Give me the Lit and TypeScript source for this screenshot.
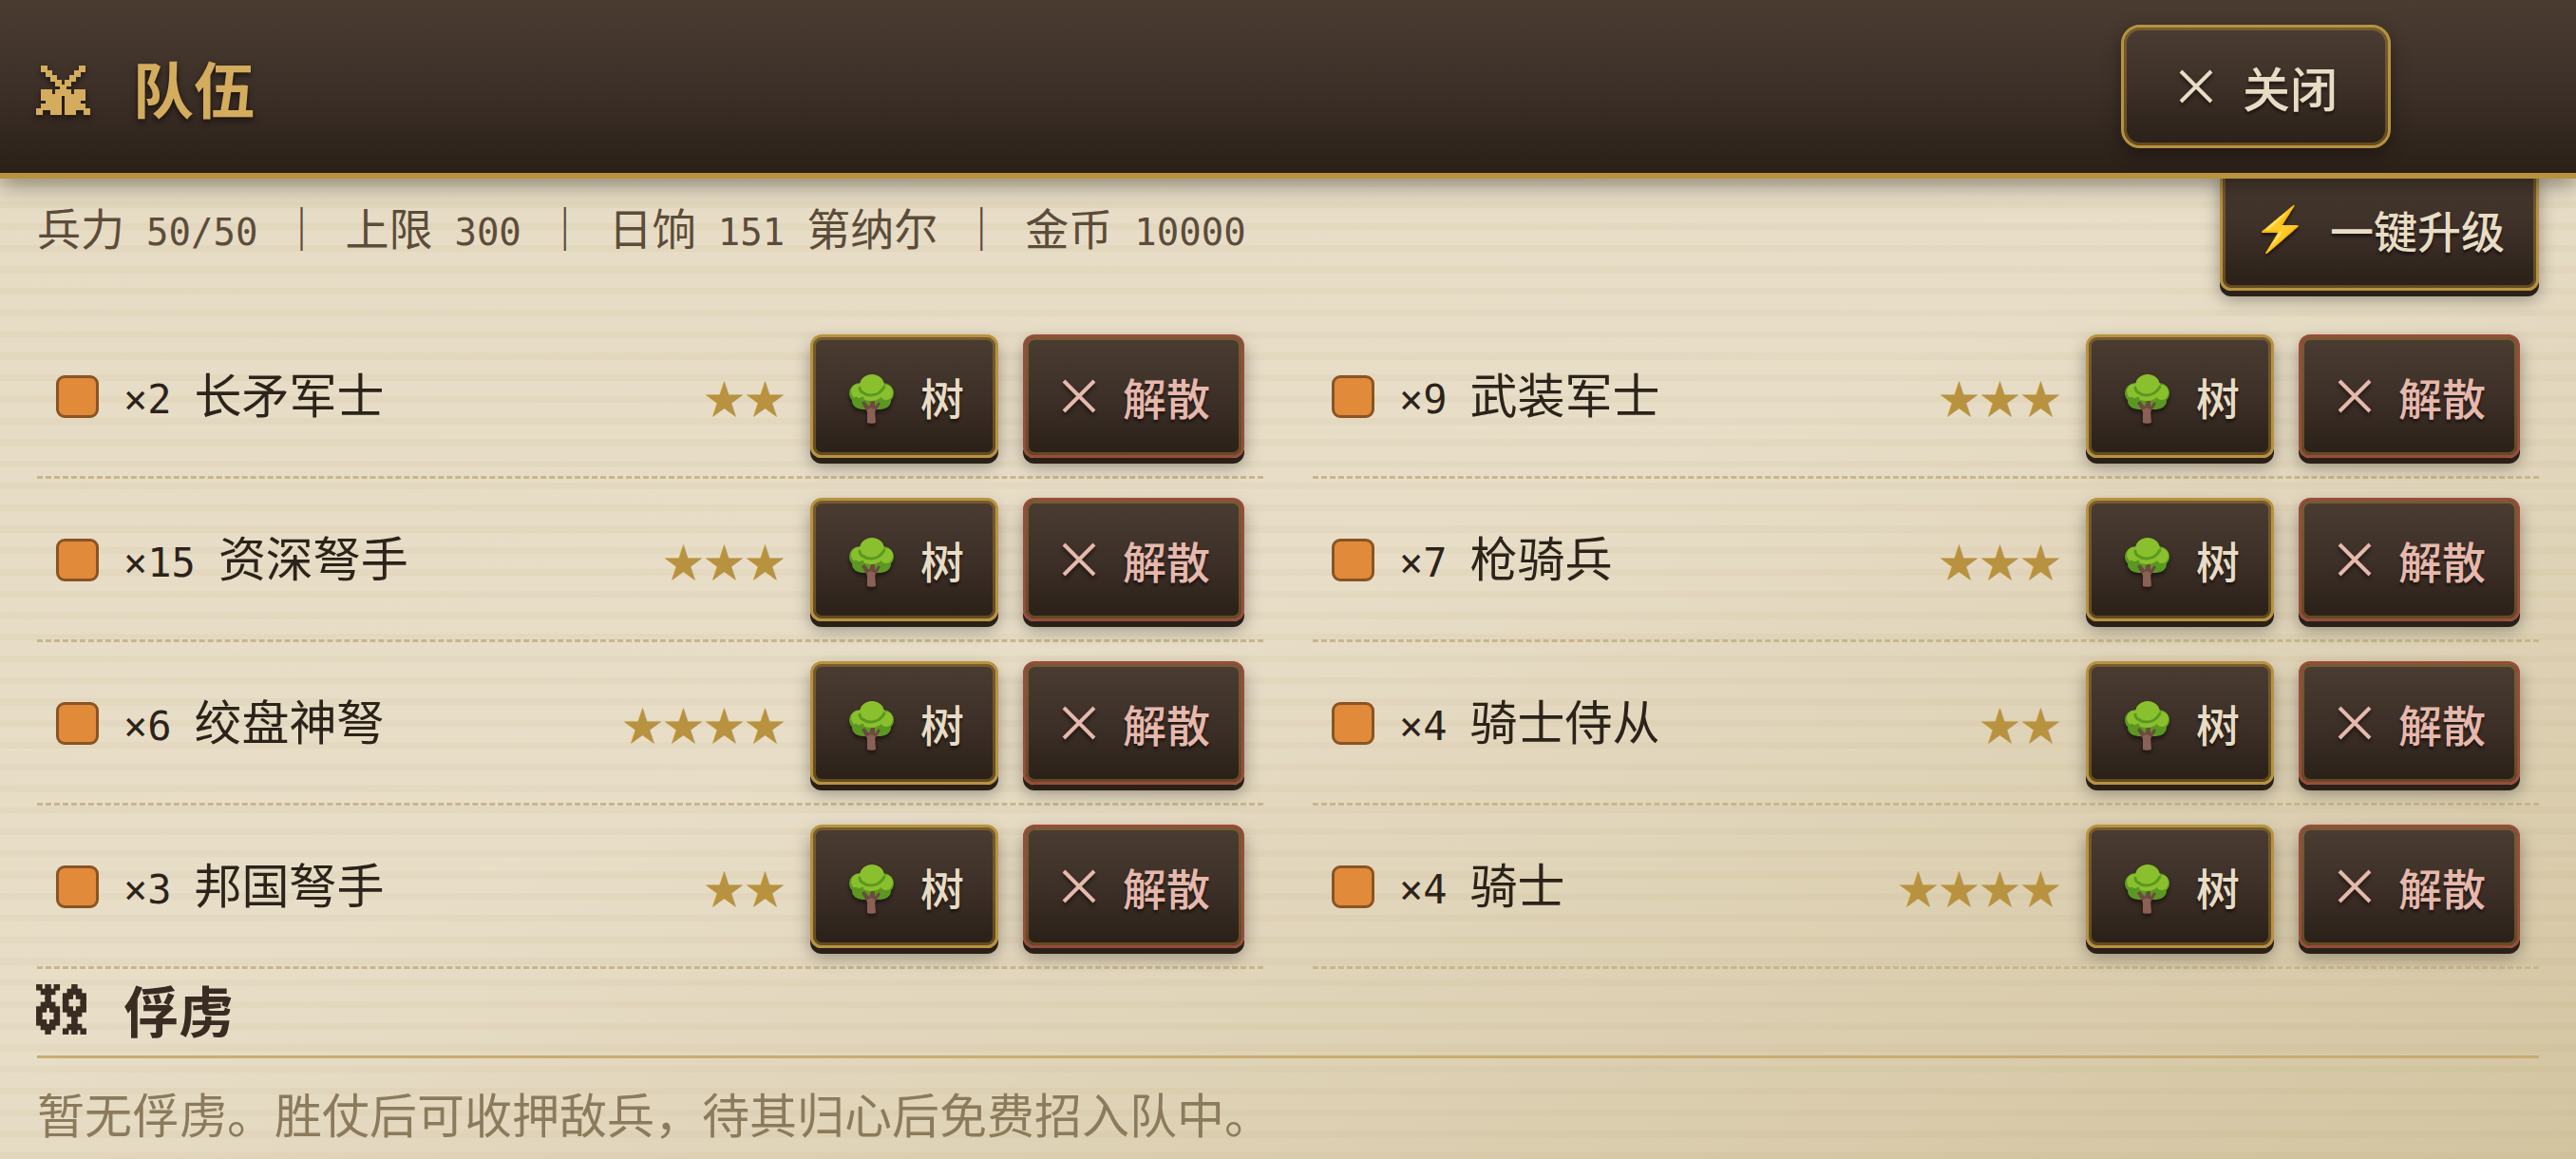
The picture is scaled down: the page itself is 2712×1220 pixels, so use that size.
import { LitElement, html, css, svg } from "lit";
import { customElement } from "lit/decorators.js";

interface Troop {
  count: number;
  name: string;
  stars: number;
}

const TROOPS: Troop[] = [
  { count: 2, name: "长矛军士", stars: 2 },
  { count: 9, name: "武装军士", stars: 3 },
  { count: 15, name: "资深弩手", stars: 3 },
  { count: 7, name: "枪骑兵", stars: 3 },
  { count: 6, name: "绞盘神弩", stars: 4 },
  { count: 4, name: "骑士侍从", stars: 2 },
  { count: 3, name: "邦国弩手", stars: 2 },
  { count: 4, name: "骑士", stars: 4 },
];

// Pixel-art icons: each "#" is one cell of the grid.
const SWORDS = [
  ".#.......#.",
  "..#.....#..",
  "...#...#...",
  "....#.#....",
  ".....#.....",
  ".##.###.##.",
  ".####.####.",
  "..###.###..",
  ".####.####.",
  "#..##.##..#",
];

const CHAINS = [
  "#.#.#...#..",
  ".###...###.",
  "..#...##.##",
  "..#...#...#",
  ".###..#...#",
  "##.##.##.##",
  "#...#..###.",
  "#...#...#..",
  "##.##...#..",
  ".###...###.",
  "..#...#.#.#",
];

const pixels = (rows: string[]) => svg`${rows.map((row, y) =>
  [...row].map((c, x) => (c === "#" ? svg`<rect x=${x} y=${y} width="1" height="1"></rect>` : ""))
)}`;

const cross = html`<svg class="cross" viewBox="0 0 36 36" aria-hidden="true">
  <path d="M2 2L34 34M34 2L2 34"></path>
</svg>`;

const tree = html`<svg class="tree" viewBox="0 0 47 52" aria-hidden="true">
  <g fill="#5b9821">
    <ellipse cx="12" cy="20" rx="12" ry="11"></ellipse>
    <ellipse cx="35" cy="20" rx="12" ry="11"></ellipse>
    <rect x="3" y="18" width="41" height="19" rx="11"></rect>
  </g>
  <g fill="#8ac02d">
    <ellipse cx="10" cy="18" rx="8" ry="8"></ellipse>
    <ellipse cx="39" cy="19" rx="7" ry="8"></ellipse>
    <ellipse cx="23" cy="20" rx="12" ry="8"></ellipse>
    <ellipse cx="24" cy="12" rx="13" ry="12"></ellipse>
  </g>
  <g fill="none" stroke="#5b9821" stroke-width="3" stroke-linecap="round">
    <path d="M11 14C11 17 13 19 16 20"></path>
    <path d="M17 21C26 24 33 20 37 13"></path>
    <path d="M7 25C9 27 12 27 14 25"></path>
  </g>
  <path fill="#6d4a3f" d="M13 30L16 28L21 34L23 28H27V34L31 29L33 31L27 40H19Z"></path>
  <path fill="#8b6055" d="M19 37L23 35L27 37L28 51C26 52 21 52 19 51Z"></path>
</svg>`;

@customElement("app-root")
export class AppRoot extends LitElement {
  static styles = css`
    :host {
      display: block;
      min-height: 100vh;
      box-sizing: border-box;
      color: #2c231a;
      font: 400 50px/66px "Noto Sans CJK SC", sans-serif;
      background:
        repeating-linear-gradient(
            180deg,
            transparent 0 4%,
            rgba(166, 140, 76, 0.06) 4% 8%,
            transparent 8% 12.5%
          )
          0 0 / 100% 182px,
        linear-gradient(160deg, #e6dbc3 0%, #e8dec8 50%, #d3c4a0 100%);
    }
    .header {
      position: relative;
      z-index: 1;
      display: flex;
      align-items: center;
      justify-content: space-between;
      padding: 26px 195px 26px 39px;
      background: linear-gradient(180deg, #4a3c31, #3d3028 50%, #2a2018);
      border-bottom: 6px solid #b8923f;
      box-shadow: 0 6px 24px rgba(0, 0, 0, 0.4);
    }
    .title,
    .section-title {
      display: flex;
      align-items: center;
      margin: 0;
      font-weight: 700;
    }
    .title {
      gap: 46px;
      font-size: 64px;
      color: #d4ac5e;
      text-shadow: 0 3px 6px rgba(0, 0, 0, 0.6);
    }
    .swords {
      width: 55px;
      height: 50px;
      margin-top: 8px;
      overflow: visible;
      fill: currentColor;
      stroke: currentColor;
      stroke-width: 0.4;
      filter: drop-shadow(0 3px 3px rgba(0, 0, 0, 0.5));
    }
    .btn {
      box-sizing: border-box;
      height: 130px;
      display: flex;
      align-items: center;
      gap: 23px;
      padding: 0 33px;
      border: 3px solid #b8923f;
      border-radius: 12px;
      background: linear-gradient(180deg, #4a3c31, #3d3028 50%, #2a2018);
      box-shadow:
        inset 0 0 0 3px rgba(184, 140, 50, 0.4),
        0 6px 0 #2a2018,
        0 9px 18px rgba(0, 0, 0, 0.35);
      color: #e8dcc4;
      font: inherit;
      font-size: 46px;
      font-weight: 500;
      white-space: nowrap;
      text-shadow: 0 3px 3px rgba(0, 0, 0, 0.5);
      cursor: pointer;
    }
    .close {
      padding: 0 53px;
      gap: 26px;
      border-radius: 20px;
      font-size: 50px;
      box-shadow:
        inset 0 0 0 3px rgba(184, 140, 50, 0.4),
        0 6px 18px rgba(0, 0, 0, 0.35);
    }
    .dismiss {
      border-color: #984c3c;
      color: #e6b8ac;
    }
    .cross {
      width: 36px;
      height: 36px;
      margin: 0 5px;
      fill: none;
      stroke: currentColor;
      stroke-width: 4;
      filter: drop-shadow(0 3px 2px rgba(0, 0, 0, 0.5));
    }
    .tree {
      width: 47px;
      height: 52px;
      margin: 6px 5px 0;
      filter: drop-shadow(0 3px 2px rgba(0, 0, 0, 0.5));
    }
    .emoji {
      font-family: "Noto Color Emoji", "Noto Sans CJK SC", sans-serif;
    }
    .main {
      padding: 0 39px;
    }
    .status {
      display: flex;
      align-items: center;
      justify-content: space-between;
      margin-top: -12px;
    }
    .stats {
      display: flex;
      align-items: baseline;
      gap: 23px;
      margin: 0;
      font-size: 46px;
      color: #5c4c3a;
    }
    .bar {
      font-weight: 700;
    }
    .num {
      font-family: "DejaVu Sans Mono", monospace;
      font-size: 39px;
    }
    .troops {
      display: grid;
      grid-template-columns: 1fr 1fr;
      column-gap: 52px;
      margin: 26px 0 0;
      padding: 0;
      list-style: none;
    }
    .troop {
      display: flex;
      align-items: center;
      gap: 26px;
      padding: 20px 20px 19px;
      border-bottom: 3px dashed #c8b68c;
    }
    .swatch {
      box-sizing: border-box;
      width: 45px;
      height: 45px;
      border: 3px solid #8a5424;
      border-radius: 9px;
      background: #e08a3a;
    }
    .label {
      flex: 1;
      display: flex;
      align-items: baseline;
      gap: 24px;
    }
    .label .num {
      font-size: 42px;
    }
    .stars {
      font-size: 43px;
      color: #b8923f;
    }
    .section-title {
      gap: 40px;
      padding: 9px 0 16px;
      border-bottom: 3px solid #c9ac72;
      font-size: 58px;
      color: #3a2c22;
    }
    .chains {
      width: 51px;
      height: 51px;
      overflow: visible;
      fill: currentColor;
      stroke: currentColor;
      stroke-width: 0.4;
    }
    .empty {
      margin: 24px 0 0;
      color: #8b7b5c;
    }
  `;

  render() {
    return html`
      <header class="header">
        <h1 class="title">
          <svg class="swords" viewBox="0 0 11 10" preserveAspectRatio="none" aria-hidden="true">${pixels(SWORDS)}</svg>
          <span>队伍</span>
        </h1>
        <button class="btn close" type="button">${cross}<span>关闭</span></button>
      </header>
      <main class="main">
        <div class="status">
          <p class="stats">
            <span>兵力</span><span class="num">50/50</span><span class="bar">｜</span>
            <span>上限</span><span class="num">300</span><span class="bar">｜</span>
            <span>日饷</span><span class="num">151</span><span>第纳尔</span><span class="bar">｜</span>
            <span>金币</span><span class="num">10000</span>
          </p>
          <button class="btn" type="button"><span class="emoji">⚡</span><span>一键升级</span></button>
        </div>
        <ul class="troops">
          ${TROOPS.map(
            (t) => html`<li class="troop">
              <span class="swatch"></span>
              <span class="label"><span class="num">×${t.count}</span><span>${t.name}</span></span>
              <span class="stars">${"★".repeat(t.stars)}</span>
              <button class="btn" type="button">${tree}<span>树</span></button>
              <button class="btn dismiss" type="button">${cross}<span>解散</span></button>
            </li>`
          )}
        </ul>
        <h2 class="section-title">
          <svg class="chains" viewBox="0 0 11 11" preserveAspectRatio="none" aria-hidden="true">${pixels(CHAINS)}</svg>
          <span>俘虏</span>
        </h2>
        <p class="empty">暂无俘虏。胜仗后可收押敌兵，待其归心后免费招入队中。</p>
      </main>
    `;
  }
}
